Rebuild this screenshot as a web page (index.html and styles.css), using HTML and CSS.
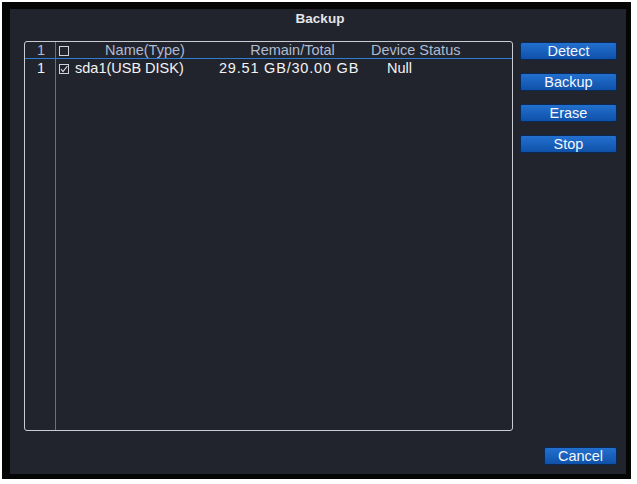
FILE: index.html
```html
<!DOCTYPE html>
<html>
<head>
<meta charset="utf-8">
<link rel="stylesheet" href="styles.css">
</head>
<body>
<div class="frame">
  <div class="window">
    <div class="title">Backup</div>
    <div class="main">
      <div class="list">
        <div class="row hdr">
          <div class="c-idx">1</div>
          <div class="c-chk"><span class="box"></span></div>
          <div class="c-name">Name(Type)</div>
          <div class="c-remain">Remain/Total</div>
          <div class="c-status">Device Status</div>
        </div>
        <div class="row data">
          <div class="c-idx">1</div>
          <div class="c-chk"><span class="box"><svg width="10" height="10" viewBox="0 0 10 10"><path d="M2 5.2 L4 7.6 L8.4 2" fill="none" stroke="#d8dde4" stroke-width="1.1"/></svg></span></div>
          <div class="c-name">sda1(USB DISK)</div>
          <div class="c-remain">29.51 GB/30.00 GB</div>
          <div class="c-status">Null</div>
        </div>
        <div class="row filler">
          <div class="c-idx"></div>
        </div>
      </div>
      <div class="side">
        <button class="btn wide">Detect</button>
        <button class="btn wide">Backup</button>
        <button class="btn wide">Erase</button>
        <button class="btn wide">Stop</button>
      </div>
    </div>
    <div class="footer">
      <button class="btn cancel">Cancel</button>
    </div>
  </div>
</div>
</body>
</html>
```
FILE: styles.css
```css
html, body {
  margin: 0;
  padding: 0;
  background: #ffffff;
}
body {
  width: 637px;
  height: 484px;
  overflow: hidden;
  font-family: "Liberation Sans", Arial, sans-serif;
}
.frame {
  margin: 2px 0 0 2px;
  width: 629px;
  height: 477px;
  background: #050506;
  padding: 7px 5px 5px 8px;
  box-sizing: border-box;
}
.window {
  width: 616px;
  height: 465px;
  background: #22242d;
  display: flex;
  flex-direction: column;
  box-sizing: border-box;
  padding: 0 9px 0 14px;
}
.title {
  height: 32px;
  line-height: 19px;
  text-align: center;
  color: #e4e6ea;
  font-weight: bold;
  font-size: 13.5px;
  padding-right: 1px;
}
.main {
  display: flex;
  height: 390px;
  gap: 7px;
}
.list {
  width: 489px;
  height: 390px;
  box-sizing: border-box;
  border: 1px solid #c9cdd3;
  border-radius: 3px;
  display: flex;
  flex-direction: column;
}
.row {
  display: grid;
  grid-template-columns: 31px 19px 140px 155px 1fr;
  font-size: 14.5px;
  align-items: stretch;
}
.row > div {
  white-space: nowrap;
}
.c-idx {
  border-right: 1px solid #2d7ed0;
  text-align: center;
  padding-left: 2px;
}
.c-chk {
  display: flex;
  align-items: center;
  padding-left: 3px;
}
.box {
  width: 10px;
  height: 10px;
  border: 1px solid #cdd2da;
  box-sizing: border-box;
  display: block;
  position: relative;
}
.box svg {
  display: block;
  margin: -1px 0 0 -1px;
}
.hdr {
  height: 16px;
  line-height: 17px;
  border-bottom: 1px solid #2d7ed0;
  color: #aebbd0;
}
.hdr .c-name { text-align: center; }
.hdr .c-remain { text-align: center; }
.hdr .c-status { padding-left: 1px; }
.data {
  height: 19px;
  line-height: 18px;
  color: #f2f3f5;
}
.data .c-remain { letter-spacing: 0.8px; padding-left: 4px; }
.data .c-status { padding-left: 17px; }
.filler {
  flex: 1;
}
.side {
  display: flex;
  flex-direction: column;
  gap: 13px;
  padding-top: 1px;
}
.btn {
  font-family: "Liberation Sans", Arial, sans-serif;
  font-size: 14.5px;
  color: #f4f6fa;
  background: linear-gradient(#2370cf, #0f51a9);
  border: 1px solid #0a2a55;
  border-radius: 2px;
  padding: 0;
  margin: 0;
  line-height: 16px;
  box-sizing: border-box;
}
.wide {
  width: 97px;
  height: 18px;
}
.footer {
  display: flex;
  justify-content: flex-end;
  padding-top: 16px;
}
.cancel {
  width: 73px;
  height: 18px;
}
```
